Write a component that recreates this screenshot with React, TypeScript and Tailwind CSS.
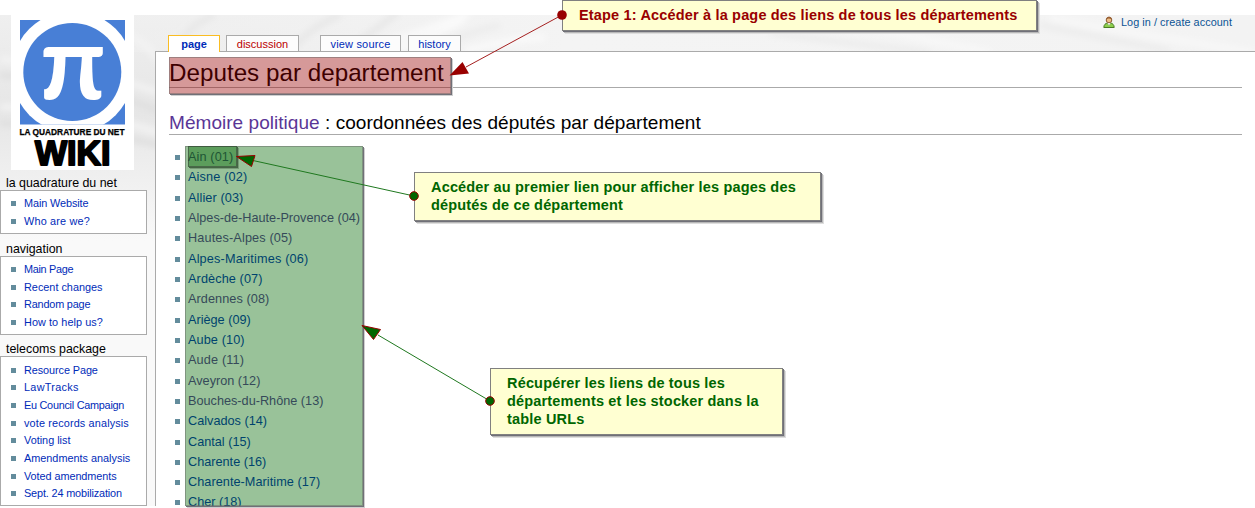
import React from "react";

type Dept = [string, boolean];

const departments: Dept[] = [
  ["Ain (01)", true],
  ["Aisne (02)", false],
  ["Allier (03)", false],
  ["Alpes-de-Haute-Provence (04)", true],
  ["Hautes-Alpes (05)", true],
  ["Alpes-Maritimes (06)", false],
  ["Ardèche (07)", false],
  ["Ardennes (08)", true],
  ["Ariège (09)", false],
  ["Aube (10)", false],
  ["Aude (11)", true],
  ["Aveyron (12)", true],
  ["Bouches-du-Rhône (13)", true],
  ["Calvados (14)", false],
  ["Cantal (15)", false],
  ["Charente (16)", false],
  ["Charente-Maritime (17)", false],
  ["Cher (18)", false],
];

const deptTracking: Record<string, string> = {
  "Ain (01)": "tracking-[0.12px]",
  "Aisne (02)": "tracking-[0.15px]",
  "Allier (03)": "tracking-[0.1px]",
  "Hautes-Alpes (05)": "tracking-[0.13px]",
  "Alpes-Maritimes (06)": "tracking-[0.17px]",
  "Ardèche (07)": "tracking-[0.1px]",
  "Ardennes (08)": "tracking-[0.07px]",
  "Aube (10)": "tracking-[0.1px]",
  "Aude (11)": "tracking-[0.15px]",
  "Charente-Maritime (17)": "tracking-[0.05px]",
};

const linkTracking: Record<string, string> = {
  "Main Website": "tracking-[-0.1px]",
  "Who are we?": "tracking-[0.17px]",
  "Main Page": "tracking-[-0.3px]",
  "Random page": "tracking-[-0.17px]",
  "How to help us?": "tracking-[0.07px]",
  "Resource Page": "tracking-[-0.08px]",
  LawTracks: "tracking-[0.3px]",
  "Eu Council Campaign": "tracking-[-0.26px]",
  "vote records analysis": "tracking-[0.14px]",
  "Voted amendments": "tracking-[-0.06px]",
  "Sept. 24 mobilization": "tracking-[-0.14px]",
};

function Backdrop() {
  return (
    <svg className="absolute left-0 top-[15px]" width="1255" height="491" aria-hidden="true">
      <defs>
        <linearGradient id="side" x1="0" y1="0" x2="0" y2="1">
          <stop offset="0" stopColor="#efefef" />
          <stop offset="0.2" stopColor="#e6e6e6" />
          <stop offset="0.31" stopColor="#eeeeee" />
          <stop offset="0.46" stopColor="#f9f9f9" />
          <stop offset="1" stopColor="#f9f9f9" />
        </linearGradient>
        <linearGradient id="top" x1="0" y1="0" x2="1" y2="0">
          <stop offset="0" stopColor="#f0f0f0" stopOpacity="0" />
          <stop offset="0.14" stopColor="#f0f0f0" stopOpacity="0.6" />
          <stop offset="0.45" stopColor="#f4f4f4" />
          <stop offset="1" stopColor="#f3f3f3" />
        </linearGradient>
        <filter id="soft" x="-10%" y="-50%" width="120%" height="200%">
          <feGaussianBlur stdDeviation="3" />
        </filter>
      </defs>
      <rect width="1255" height="491" fill="url(#side)" />
      <rect width="1255" height="37" fill="url(#top)" />
      <g filter="url(#soft)" fill="none" strokeWidth="6">
        <path d="M0 44Q80 50 160 78M0 92Q80 92 160 118M120 14Q150 30 160 48" stroke="#f3f3f3" />
        <path d="M0 60Q80 66 160 96M0 108Q80 112 160 130" stroke="#dfdfdf" />
        <path d="M215 0Q188 10 172 38M340 0Q305 15 290 38M398 -3Q370 20 340 38" stroke="#e7e7e7" />
        <path d="M465 4Q430 24 390 36M545 22Q500 26 465 36M470 -2Q400 25 350 38" stroke="#fafafa" />
        <path d="M500 10Q465 18 425 36M770 18L930 38M1040 10L1170 36" stroke="#ececec" />
        <path d="M1050 4L1255 38M870 12L990 38" stroke="#f8f8f8" />
      </g>
    </svg>
  );
}

function Logo() {
  return (
    <svg className="ml-[11px] block shrink-0" width="123" height="155" viewBox="11 15 123 155">
      <rect x="11" y="15" width="123" height="155" fill="#fff" />
      <rect x="20" y="20" width="105" height="104.5" fill="#487fd6" />
      <clipPath id="sq"><rect x="20" y="20" width="105" height="104.5" /></clipPath>
      <circle cx="72.5" cy="72" r="61" fill="#fff" clipPath="url(#sq)" />
      <circle cx="72.3" cy="72" r="49" fill="#487fd6" />
      <text x="40" y="99" fill="#fff" fontFamily="Lato, sans-serif" fontWeight="bold" fontSize="104">π</text>
      <text x="19.5" y="135.3" textLength="105" lengthAdjust="spacingAndGlyphs" fontFamily="Liberation Sans, sans-serif" fontWeight="bold" fontSize="8.2" stroke="#000" strokeWidth="0.25">LA QUADRATURE DU NET</text>
      <text x="35" y="164.5" textLength="75.5" lengthAdjust="spacingAndGlyphs" fontFamily="Liberation Sans, sans-serif" fontWeight="bold" fontSize="34.5" stroke="#000" strokeWidth="2" strokeLinejoin="round">WIKI</text>
    </svg>
  );
}

function Portlet({ title, items, className }: { title: string; items: string[]; className: string }) {
  return (
    <section>
      <h3 className="h-[15px] pl-1.5 text-[12.4px] leading-[17px] text-black">{title}</h3>
      <ul className={`w-[147px] border border-[#aaa] bg-white ${className}`}>
        {items.map((t) => (
          <li key={t} className={`flex h-[17.65px] items-center pl-[10px] text-[10.86px] leading-[17px] text-[#002bb8] ${linkTracking[t] ?? ""}`}>
            <span className="mr-2 size-[5px] bg-[#638c9c]" />
            {t}
          </li>
        ))}
      </ul>
    </section>
  );
}

function Tab({ label, className }: { label: string; className: string }) {
  return (
    <div className={`flex items-center justify-center border border-b-0 text-[11px] leading-[14px] ${className}`}>{label}</div>
  );
}

function Callout({ className, children }: { className: string; children: React.ReactNode }) {
  return (
    <div className={`absolute border border-[#808080] bg-[#ffffd2] pl-4 text-[14.5px] font-bold leading-[18px] tracking-[0.17px] shadow-[1px_1px_0_#707078,2px_2px_0_#b8b8b8,3px_3px_0_#dedede] ${className}`}>
      {children}
    </div>
  );
}

function UserIcon() {
  return (
    <svg width="12" height="13" viewBox="0 0 12 13" className="mr-[6px]">
      <path d="M.8 11.5C.8 8.6 2.8 7.4 4 7L6 9L8 7C9.4 7.5 11.2 8.7 11.2 11.5Z" fill="#8cce4c" stroke="#4c7d25" />
      <path d="M4.3 7L6 9.5L7.7 7Z" fill="#fff" />
      <circle cx="6" cy="4" r="2.8" fill="#edbd85" stroke="#8c5a32" />
      <path d="M3.3 3.2Q4 0 6.5 .8Q8.8 1.2 8.7 3.5Q6 1.8 3.3 3.2Z" fill="#9b6034" />
    </svg>
  );
}

export default function App() {
  return (
    <div className="relative h-[508px] w-[1255px] overflow-hidden bg-white font-['Liberation_Sans',Arial,sans-serif]">
      <Backdrop />
      <div className="relative flex h-[506px] overflow-hidden pt-[15px]">
        <aside className="w-[155px] shrink-0">
          <Logo />
          <div className="flex flex-col pt-[5px]">
            <Portlet title="la quadrature du net" items={["Main Website", "Who are we?"]} className="mb-[7px] h-[44px] pt-[3.9px]" />
            <Portlet title="navigation" items={["Main Page", "Recent changes", "Random page", "How to help us?"]} className="mb-[6px] h-[79px] pt-[3.9px]" />
            <Portlet
              title="telecoms package"
              items={["Resource Page", "LawTracks", "Eu Council Campaign", "vote records analysis", "Voting list", "Amendments analysis", "Voted amendments", "Sept. 24 mobilization"]}
              className="h-[150px] pt-[4.5px]"
            />
          </div>
        </aside>
        <div className="flex min-w-0 flex-1 flex-col">
          <header className="relative z-10 flex h-9 shrink-0 items-start justify-between pl-[13px] pr-[23px]">
            <nav className="flex items-start pt-5">
              <Tab label="page" className="h-[17px] w-[52px] border-[#fabd23] bg-white font-bold text-[#002bb8]" />
              <Tab label="discussion" className="ml-[6px] h-4 w-[73px] border-[#aaa] bg-[#fcfcfc] text-[#ba0000]" />
              <Tab label="view source" className="ml-[21px] h-4 w-[81px] border-[#aaa] bg-[#fcfcfc] tracking-[0.18px] text-[#002bb8]" />
              <Tab label="history" className="ml-[7px] h-4 w-[53px] border-[#aaa] bg-[#fcfcfc] text-[#002bb8]" />
            </nav>
            <div className="flex items-center text-[10.86px] leading-[15px] tracking-[0.05px] text-[#0b5394]">
              <UserIcon />
              Log in / create account
            </div>
          </header>
          <div className="flex-1 border-l border-t border-[#aaa] bg-white px-[13px]">
            <h1 className="h-9 border-b border-[#aaa] pt-[7px] text-[24.2px] leading-7 tracking-[0.02px] text-black">Deputes par departement</h1>
            <h2 className="mt-[23px] h-6 border-b border-[#aaa] text-[19.05px] leading-6 tracking-[0.03px] text-black">
              <span className="text-[#5a3696]">Mémoire politique</span> : coordonnées des députés par département
            </h2>
            <ul className="pl-[6px] pt-[12px]">
              {departments.map(([name, visited]) => (
                <li key={name} className={`flex h-[20.32px] items-center text-[12.7px] leading-5 ${visited ? "text-[#5a3696]" : "text-[#002bb8]"} ${deptTracking[name] ?? ""}`}>
                  <span className="mr-2 mt-px size-[5px] bg-[#638c9c]" />
                  {name}
                </li>
              ))}
            </ul>
          </div>
        </div>
      </div>
      <div className="absolute left-[169px] top-[57px] h-[37px] w-[282px] border border-[#666]/50 bg-[#990000]/40 shadow-[1px_1px_0_#707078,2px_2px_0_#cfcfcf]" />
      <div className="absolute left-[185px] top-[146px] h-[360px] w-[178px] border border-[#666]/50 bg-[#006600]/40 shadow-[1px_1px_0_#707078,2px_2px_0_#cfcfcf]" />
      <div className="absolute left-[188px] top-[146px] h-[21px] w-[49px] border border-[#333]/50 bg-[#006600]/40 shadow-[1px_1px_0_#446544,2px_2px_0_#779b77]" />
      <Callout className="left-[562px] top-0 h-[31px] w-[475px] pt-[5px] text-[#990000]">Etape 1: Accéder à la page des liens de tous les départements</Callout>
      <Callout className="left-[414px] top-[172px] h-[49px] w-[407px] pt-[5px] text-[#006600]">
        Accéder au premier lien pour afficher les pages des<br />députés de ce département
      </Callout>
      <Callout className="left-[490px] top-[368px] h-[67px] w-[293px] pt-[5px] text-[#006600]">
        Récupérer les liens de tous les<br />départements et les stocker dans la<br />table URLs
      </Callout>
      <svg className="absolute left-0 top-0" width="1255" height="508" aria-hidden="true">
        <path d="M562 15L466 67" stroke="#a52020" />
        <path d="M449.5 75.5L462.5 62L469 73.5Z" fill="#990000" />
        <circle cx="562" cy="15" r="4.8" fill="#990000" />
        <path d="M414 196L253 160.5M490 401L378 335" stroke="#1f781f" />
        <path d="M236.5 156.5L255 155.5L251.5 166.5ZM362 325.5L380.5 329.5L373.5 339.5Z" fill="#006600" stroke="#990000" />
        <circle cx="414" cy="196" r="4.3" fill="#006600" stroke="#990000" />
        <circle cx="490" cy="401" r="4.3" fill="#006600" stroke="#990000" />
      </svg>
    </div>
  );
}
